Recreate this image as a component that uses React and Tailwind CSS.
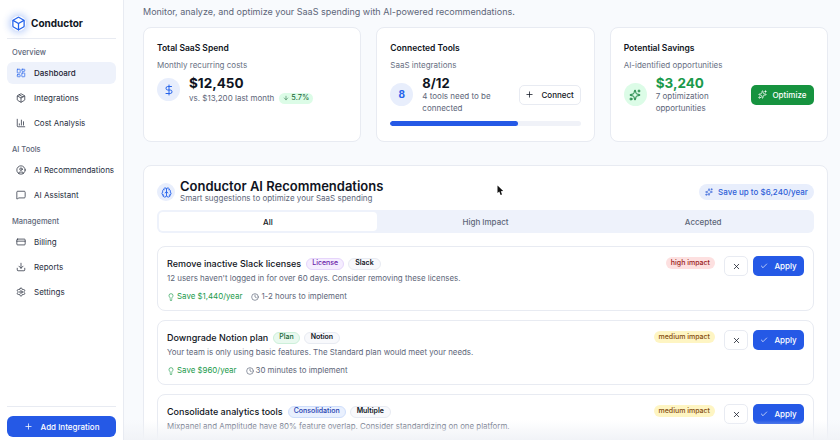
import React from 'react';
import {
  Box, LayoutDashboard, ChartColumn, CircleUser, MessageSquare, CreditCard, Download, Settings,
  Plus, DollarSign, ArrowDown, Sparkles, Brain, Lightbulb, Clock, X, Check, Package,
} from 'lucide-react';

const navGroups = [
  {
    label: 'Overview',
    items: [
      { name: 'Dashboard', icon: LayoutDashboard, active: true },
      { name: 'Integrations', icon: Package },
      { name: 'Cost Analysis', icon: ChartColumn },
    ],
  },
  {
    label: 'AI Tools',
    items: [
      { name: 'AI Recommendations', icon: CircleUser },
      { name: 'AI Assistant', icon: MessageSquare },
    ],
  },
  {
    label: 'Management',
    items: [
      { name: 'Billing', icon: CreditCard },
      { name: 'Reports', icon: Download },
      { name: 'Settings', icon: Settings },
    ],
  },
];

const recommendations = [
  {
    title: 'Remove inactive Slack licenses',
    tag: 'License',
    tagClass: 'bg-[#f5edff] border-[#e6d5fb] text-[#6b21a8]',
    tool: 'Slack',
    impact: 'high impact',
    impactClass: 'bg-[#fde0e0] text-[#991b1b]',
    description: "12 users haven't logged in for over 60 days. Consider removing these licenses.",
    save: 'Save $1,440/year',
    time: '1-2 hours to implement',
  },
  {
    title: 'Downgrade Notion plan',
    tag: 'Plan',
    tagClass: 'bg-[#e9f9ef] border-[#cdf0da] text-[#166534]',
    tool: 'Notion',
    impact: 'medium impact',
    impactClass: 'bg-[#fef5c3] text-[#854d0e]',
    description: 'Your team is only using basic features. The Standard plan would meet your needs.',
    save: 'Save $960/year',
    time: '30 minutes to implement',
  },
  {
    title: 'Consolidate analytics tools',
    tag: 'Consolidation',
    tagClass: 'bg-[#e9f0fe] border-[#cfdefb] text-[#1e40af]',
    tool: 'Multiple',
    impact: 'medium impact',
    impactClass: 'bg-[#fef5c3] text-[#854d0e]',
    description: 'Mixpanel and Amplitude have 80% feature overlap. Consider standardizing on one platform.',
    save: 'Save $840/year',
    time: '3-4 hours to implement',
  },
];

const Sidebar = () => (
  <aside className="w-[124px] h-[440px] shrink-0 flex flex-col bg-white border-r border-[#e8ebf2] px-[7px]">
    <div className="flex items-center gap-[5px] h-[39px] pt-[8px] pl-[4px] border-b border-[#e8ebf2]">
      <span className="flex rounded-full shadow-[0_0_7px_2px_rgba(37,99,235,0.3)]">
        <Box size={15} color="#2563eb" />
      </span>
      <span className="text-[10px] font-bold text-[#0f1422]">Conductor</span>
    </div>
    <nav className="flex-1 flex flex-col">
      {navGroups.map((group) => (
        <div key={group.label} className="pt-[8px] pb-[2px]">
          <div className="h-[15px] pl-[5px] text-[7.5px] leading-[11px] font-medium text-[#5d6679]">{group.label}</div>
          <div className="flex flex-col gap-[3px]">
            {group.items.map((item) => (
              <div
                key={item.name}
                className={`h-[22px] flex items-center gap-[8px] pl-[9px] rounded-[6px] text-[8px] whitespace-nowrap ${item.active ? 'bg-[#eef2fb] text-[#1c2333] font-medium' : 'text-[#262d3d]'}`}
              >
                <item.icon className="shrink-0" size={10} strokeWidth={1.7} color={item.active ? '#2563eb' : '#1c2333'} />
                {item.name}
              </div>
            ))}
          </div>
        </div>
      ))}
    </nav>
    <div className="border-t border-[#e8ebf2] pt-[9px] pb-[3px]">
      <button className="w-full h-[21px] flex items-center justify-center gap-[8px] rounded-[6px] bg-[#2559e6] text-white text-[8px] font-medium">
        <Plus size={9} />
        Add Integration
      </button>
    </div>
  </aside>
);

const CardHead = ({ title, subtitle }) => (
  <>
    <h3 className="text-[8.5px] leading-[13px] font-semibold text-[#0f1422]">{title}</h3>
    <p className="mt-[4px] text-[8px] leading-[12px] text-[#687083]">{subtitle}</p>
  </>
);

const StatCards = () => (
  <div className="grid grid-cols-3 gap-[15px]">
    <div className="h-[115px] bg-white border border-[#e8ebf2] rounded-[8px] pt-[14px] px-[13px]">
      <CardHead title="Total SaaS Spend" subtitle="Monthly recurring costs" />
      <div className="mt-[4px] flex items-center gap-[9px]">
        <div className="w-[23px] h-[23px] rounded-full bg-[#e8eefc] flex items-center justify-center">
          <DollarSign size={12} color="#2563eb" />
        </div>
        <div>
          <div className="text-[13.5px] leading-[17px] font-bold text-[#0f1422]">$12,450</div>
          <div className="flex items-center gap-[5px] text-[8px] leading-[12px] text-[#5d6679] whitespace-nowrap">
            vs. $13,200 last month
            <span className="flex items-center gap-[2px] h-[11px] px-[4px] rounded-full bg-[#dcfce7] text-[#166534] text-[7.5px]">
              <ArrowDown size={6} />5.7%
            </span>
          </div>
        </div>
      </div>
    </div>

    <div className="h-[115px] bg-white border border-[#e8ebf2] rounded-[8px] pt-[14px] px-[13px]">
      <CardHead title="Connected Tools" subtitle="SaaS integrations" />
      <div className="mt-[4px] flex items-center">
        <div className="w-[23px] h-[23px] rounded-full bg-[#e8eefc] flex items-center justify-center text-[10px] font-bold text-[#2563eb]">8</div>
        <div className="ml-[9px] w-[90px]">
          <div className="text-[13px] leading-[16px] font-bold text-[#0f1422]">8/12</div>
          <div className="text-[8px] leading-[11.5px] text-[#5d6679]">4 tools need to be connected</div>
        </div>
        <button className="ml-auto w-[62px] h-[20px] flex items-center justify-center gap-[7px] bg-white border border-[#e8ebf2] rounded-[5px] text-[8px] font-medium text-[#0f1422]">
          <Plus size={9} />
          Connect
        </button>
      </div>
      <div className="mt-[7px] h-[5px] rounded-full bg-[#f0f2f8] overflow-hidden">
        <div className="w-[67%] h-full bg-[#2559e6] rounded-full" />
      </div>
    </div>

    <div className="h-[115px] bg-white border border-[#e8ebf2] rounded-[8px] pt-[14px] px-[13px]">
      <CardHead title="Potential Savings" subtitle="AI-identified opportunities" />
      <div className="mt-[4px] flex items-center">
        <div className="w-[23px] h-[23px] rounded-full bg-[#dcfce7] flex items-center justify-center">
          <Sparkles size={12} color="#15803d" />
        </div>
        <div className="ml-[9px] w-[70px]">
          <div className="text-[13.5px] leading-[16px] font-bold text-[#1b9a4b]">$3,240</div>
          <div className="text-[8px] leading-[11.5px] text-[#5d6679]">7 optimization opportunities</div>
        </div>
        <button className="ml-auto w-[63px] h-[20px] flex items-center justify-center gap-[5px] bg-[#16933f] rounded-[5px] text-[8px] font-medium text-white">
          <Sparkles size={9} />
          Optimize
        </button>
      </div>
    </div>
  </div>
);

const RecCard = ({ rec }) => (
  <div className="h-[65px] shrink-0 bg-white border border-[#e8ebf2] rounded-[8px] pl-[9px] pr-[9px] pt-[9px] flex justify-between">
    <div>
      <div className="flex items-center gap-[4px] h-[13px] mt-[1px]">
        <span className="mr-[1px] text-[9px] font-medium text-[#0f1422]">{rec.title}</span>
        <span className={`h-[12px] px-[5px] flex items-center rounded-full border text-[7px] font-medium ${rec.tagClass}`}>{rec.tag}</span>
        <span className="h-[12px] px-[6px] flex items-center rounded-full border border-[#e8ebf2] bg-[#f8f9fc] text-[7px] font-semibold text-[#0f1422]">{rec.tool}</span>
      </div>
      <p className="mt-[2px] text-[7.9px] leading-[13px] text-[#5d6679]">{rec.description}</p>
      <div className="mt-[5px] flex items-center gap-[9px] text-[7.9px] leading-[13px]">
        <span className="flex items-center gap-[2px] text-[#1b9a4b]">
          <Lightbulb size={8} />
          {rec.save}
        </span>
        <span className="flex items-center gap-[2px] text-[#5d6679]">
          <Clock size={8} />
          {rec.time}
        </span>
      </div>
    </div>
    <div className="flex items-start">
      <span className={`mt-[1px] h-[12px] px-[5px] flex items-center rounded-full text-[7px] font-medium ${rec.impactClass}`}>{rec.impact}</span>
      <button className="ml-[9px] w-[24px] h-[20px] flex items-center justify-center bg-white border border-[#e8ebf2] rounded-[5px] text-[#0f1422]">
        <X size={9} />
      </button>
      <button className="ml-[5px] w-[51px] h-[20px] flex items-center justify-center gap-[6px] bg-[#2559e6] rounded-[5px] text-white text-[8px] font-medium">
        <Check size={8} />
        Apply
      </button>
    </div>
  </div>
);

const Recommendations = () => (
  <section className="mt-[23px] h-[300px] bg-white border border-[#e8ebf2] rounded-[8px] px-[13px] pt-[14px]">
    <div className="flex items-center justify-between h-[24px]">
      <div className="flex items-center gap-[5px]">
        <div className="w-[18px] h-[18px] rounded-full bg-[#e8eefc] flex items-center justify-center">
          <Brain size={11} color="#2563eb" />
        </div>
        <div>
          <h2 className="text-[13px] leading-[13px] font-semibold text-[#0f1422]">Conductor AI Recommendations</h2>
          <p className="text-[8px] leading-[11px] text-[#5d6679]">Smart suggestions to optimize your SaaS spending</p>
        </div>
      </div>
      <span className="h-[16px] w-[115px] flex items-center justify-center gap-[5px] rounded-full bg-[#e8eefc] text-[8px] font-medium text-[#2f5fd8]">
        <Sparkles size={8} />
        Save up to $6,240/year
      </span>
    </div>
    <div className="mt-[6px] h-[23px] p-[2px] grid grid-cols-3 rounded-[6px] bg-[#eef2fb] text-[8px] text-[#5d6679] font-medium text-center">
      <div className="flex items-center justify-center rounded-[4px] bg-white text-[#0f1422]">All</div>
      <div className="flex items-center justify-center">High Impact</div>
      <div className="flex items-center justify-center">Accepted</div>
    </div>
    <div className="mt-[13px] flex flex-col gap-[9px]">
      {recommendations.map((rec) => (
        <RecCard key={rec.title} rec={rec} />
      ))}
    </div>
  </section>
);

export default function App() {
  return (
    <div className="relative w-[840px] h-[440px] flex overflow-hidden bg-[#f8fafd] font-['Inter',sans-serif]">
      <Sidebar />
      <main className="flex-1 min-w-0 pl-[19px] pr-[12px] pt-[5px]">
        <p className="h-[22px] text-[9px] leading-[13px] text-[#5d6679]">
          Monitor, analyze, and optimize your SaaS spending with AI-powered recommendations.
        </p>
        <StatCards />
        <Recommendations />
      </main>
      {/* fade at the bottom of the scroll area */}
      <div className="absolute left-[124px] right-0 bottom-0 h-[20px] bg-gradient-to-b from-transparent to-[#f1f3f7]" />
      {/* mouse cursor captured in the recording */}
      <svg className="absolute left-[497px] top-[185px]" width="7" height="11" viewBox="0 0 7 11">
        <path d="M0.5 0.5 L0.5 8 L2.3 6.6 L3.6 10 L5 9.4 L3.8 6.2 L6.2 6 Z" fill="#111" />
      </svg>
    </div>
  );
}
